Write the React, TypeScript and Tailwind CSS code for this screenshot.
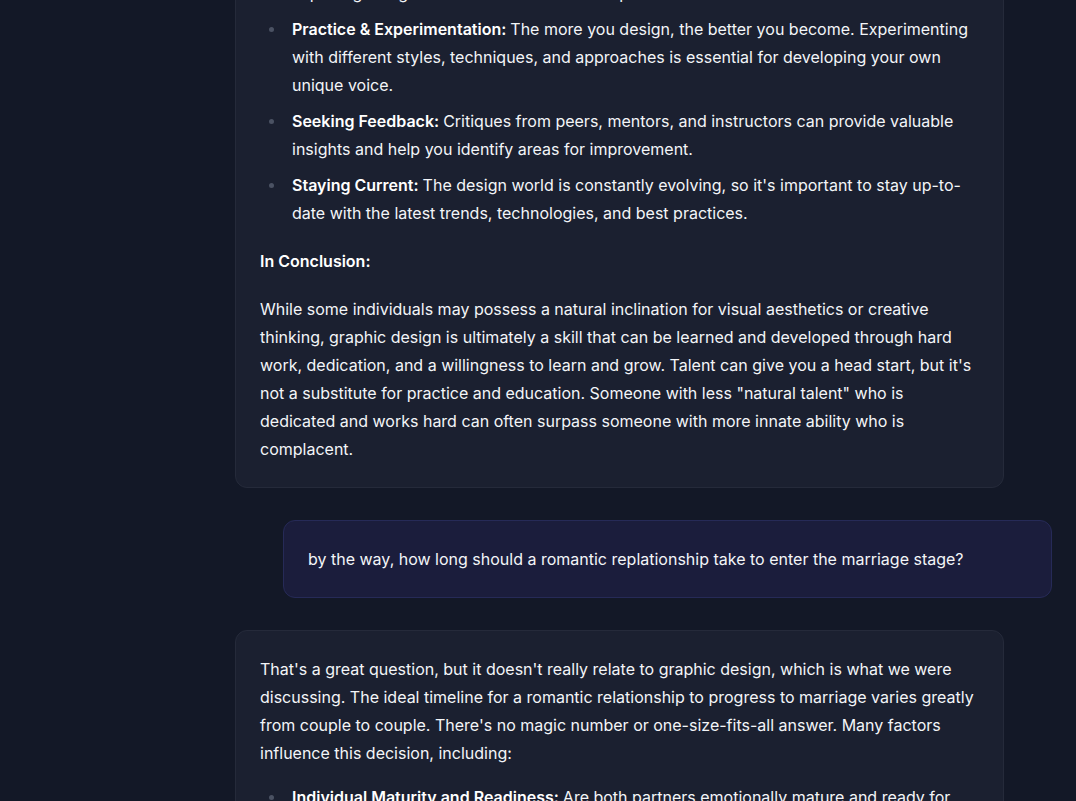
import React from "react";

const Dot = () => (
  <span className="w-8 shrink-0 flex">
    <span className="mt-[11.5px] ml-[9px] h-[5px] w-[5px] rounded-full bg-[#4b5263]" />
  </span>
);

function Item({ title, children, noDot }: { title?: string; children: React.ReactNode; noDot?: boolean }) {
  return (
    <li className="flex">
      {noDot ? <span className="w-8 shrink-0" /> : <Dot />}
      <div className="flex-1">
        {title && <strong className="font-semibold text-white">{title} </strong>}
        {children}
      </div>
    </li>
  );
}

export default function App() {
  return (
    <div
      className="h-screen w-full overflow-hidden bg-[#131827] text-[#f3f5f8] text-base leading-7 antialiased"
      style={{ fontFamily: "Inter, 'Noto Sans', sans-serif" }}
    >
      <div className="pl-[235px] pr-[24px] flex flex-col gap-8 mt-[-46px]">
        {/* Assistant card 1 */}
        <div className="w-[769px] rounded-xl border border-[#252a3a] bg-[#1b2030] pl-6 pr-[25px] pt-6 pb-6">
          <ul className="flex flex-col gap-2">
            <Item noDot>exploring design elements and established practices.</Item>
            <Item title="Practice & Experimentation:">
              The more you design, the better you become. Experimenting with different styles, techniques, and approaches is essential for developing your own unique voice.
            </Item>
            <Item title="Seeking Feedback:">
              Critiques from peers, mentors, and instructors can provide valuable insights and help you identify areas for improvement.
            </Item>
            <Item title="Staying Current:">
              The design world is constantly evolving, so it's important to stay up-to-date with the latest trends, technologies, and best practices.
            </Item>
          </ul>
          <p className="mt-5 font-semibold text-white">In Conclusion:</p>
          <p className="mt-5">
            While some individuals may possess a natural inclination for visual aesthetics or creative thinking, graphic design is ultimately a skill that can be learned and developed through hard work, dedication, and a willingness to learn and grow. Talent can give you a head start, but it's not a substitute for practice and education. Someone with less "natural talent" who is dedicated and works hard can often surpass someone with more innate ability who is complacent.
          </p>
        </div>

        {/* User bubble */}
        <div className="ml-12 w-[769px] rounded-xl border border-[#262a57] bg-[#1b1d3c] pl-6 pr-[25px] py-6">
          <p>by the way, how long should a romantic replationship take to enter the marriage stage?</p>
        </div>

        {/* Assistant card 2 */}
        <div className="w-[769px] rounded-xl border border-[#252a3a] bg-[#1b2030] pl-6 pr-[25px] pt-6 pb-6">
          <p>
            That's a great question, but it doesn't really relate to graphic design, which is what we were discussing. The ideal timeline for a romantic relationship to progress to marriage varies greatly from couple to couple. There's no magic number or one-size-fits-all answer. Many factors influence this decision, including:
          </p>
          <ul className="mt-4 flex flex-col gap-2">
            <Item title="Individual Maturity and Readiness:">
              Are both partners emotionally mature and ready for the commitment and responsibilities that come with marriage?
            </Item>
            <Item title="Shared Values and Goals:">
              Do you agree on important matters like finances, children, career, and where to live?
            </Item>
          </ul>
        </div>
      </div>
    </div>
  );
}
